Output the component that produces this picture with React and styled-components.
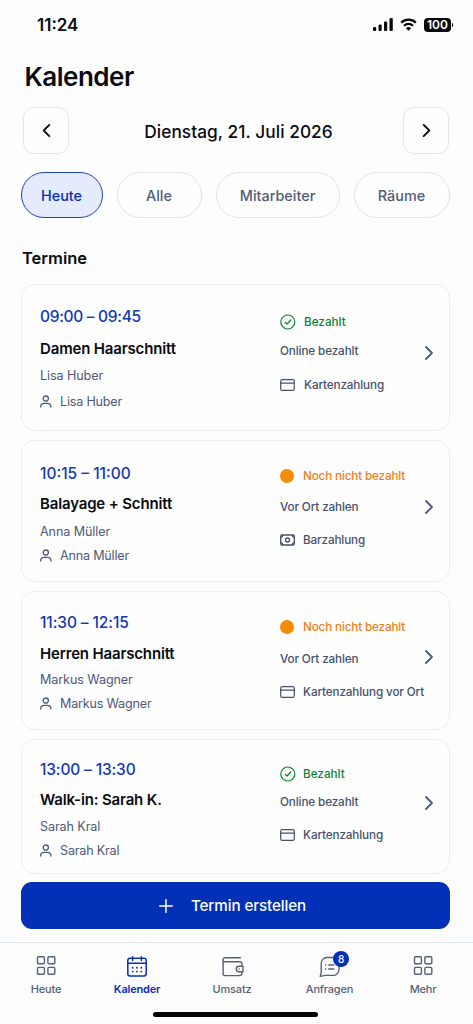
import React from 'react';
import styled, { createGlobalStyle } from 'styled-components';

const appointments = [
    {
        time: '09:00 – 09:45', title: 'Damen Haarschnitt', name: 'Lisa Huber',
        paid: true, place: 'Online bezahlt', method: 'Kartenzahlung', icon: 'card',
        height: 147, left: [21, 12, 7, 6], right: [27, 9, 14], spacing: -0.3, iconWidth: 24, openPad: 10
    },
    {
        time: '10:15 – 11:00', title: 'Balayage + Schnitt', name: 'Anna Müller',
        paid: false, place: 'Vor Ort zahlen', method: 'Barzahlung', icon: 'cash',
        height: 142, left: [22, 10, 8, 4], right: [25, 11, 13], spacing: 0, iconWidth: 23, openPad: 8
    },
    {
        time: '11:30 – 12:15', title: 'Herren Haarschnitt', name: 'Markus Wagner',
        paid: false, place: 'Vor Ort zahlen', method: 'Kartenzahlung vor Ort', icon: 'card',
        height: 139, left: [20, 11, 6, 4], right: [25, 12, 13], spacing: -0.1, iconWidth: 23, openPad: 8
    },
    {
        time: '13:00 – 13:30', title: 'Walk-in: Sarah K.', name: 'Sarah Kral',
        paid: true, place: 'Online bezahlt', method: 'Kartenzahlung', icon: 'card',
        height: 135, left: [19, 10, 7, 4], right: [24, 8, 13], spacing: -0.15, iconWidth: 23, openPad: 8
    }
];

function Chevron({ left, size, width }) {
    return (
        <Icon $w={size} $h={size} viewBox="0 0 16 16" strokeWidth={width}>
            <path d={left ? 'M11 2 5 8l6 6' : 'M5 2l6 6-6 6'} />
        </Icon>
    )
}

function PersonIcon() {
    return (
        <Icon $w={12} $h={13} viewBox="0 0 12 13" strokeWidth="1.3">
            <circle cx="5.8" cy="3.6" r="2.6" />
            <path d="M.7 12.1v-.5c0-2 1.500-3.200 3.500-3.200h3.200c2 0 3.500 1.200 3.500 3.200v.5" />
        </Icon>
    )
}

function MethodIcon({ type }) {
    if (type === 'cash') {
        return (
            <Icon $w={15} $h={12} viewBox="0 0 15 12" strokeWidth="1.3">
                <rect x=".7" y="1" width="13.600" height="10" rx="1.200" />
                <circle cx="7.500" cy="6" r="2" />
                <path d="M1 3.200c1 0 1.600-.7 1.600-1.800M14 3.200c-1 0-1.600-.7-1.600-1.800M1 8.800c1 0 1.600.7 1.600 1.800M14 8.800c-1 0-1.600.7-1.600 1.800" />
            </Icon>
        )
    }
    return (
        <Icon $w={15} $h={12} viewBox="0 0 15 12" strokeWidth="1.2">
            <rect x=".7" y=".7" width="13.600" height="10.600" rx="1.600" />
            <path d="M.7 4.200h13.600" />
        </Icon>
    )
}

function StatusIcon({ paid }) {
    if (!paid) {
        return <Dot />
    }
    return (
        <Icon $w={16} $h={16} viewBox="0 0 16 16" strokeWidth="1.2">
            <circle cx="7.800" cy="8" r="7" />
            <path d="M5.100 8.300 7 10l3.700-4" />
        </Icon>
    )
}

function GridIcon() {
    return (
        <Icon $w={20} $h={20} viewBox="0 0 20 20" strokeWidth="1.4">
            <rect x="1.500" y=".8" width="6.900" height="6.900" rx="1" />
            <rect x="11.900" y=".8" width="6.900" height="6.900" rx="1" />
            <rect x="1.500" y="11.400" width="6.900" height="6.900" rx="1" />
            <rect x="11.900" y="11.400" width="6.900" height="6.900" rx="1" />
        </Icon>
    )
}

function CalendarIcon() {
    return (
        <Icon $w={22} $h={22} viewBox="0 0 22 22" strokeWidth="1.5">
            <rect x="1.800" y="2.300" width="18.400" height="17.600" rx="2.200" />
            <path d="M1.800 7.200h18.400M6.600.8v3.600M15.400.8v3.600" />
            <path
                d="M6.700 11.800h.01M11 11.800h.01M15.300 11.800h.01M6.700 15.600h.01M11 15.600h.01M15.300 15.600h.01"
                strokeWidth="1.900"
            />
        </Icon>
    )
}

function WalletIcon() {
    return (
        <Icon $w={23} $h={22} viewBox="-.6 -.6 23 22" strokeWidth="1.4">
            <path d="M18.800 1.100H3.500a2 2 0 0 0-2 2v13.900a2 2 0 0 0 2 2h14.800a2 2 0 0 0 2-2v-1.900M1.600 4.300c.3.500.9.800 1.700.8h15a2 2 0 0 1 2 2v2.500" />
            <path d="M21.400 9.700h-4a2.700 2.700 0 0 0 0 5.400h4zM17.500 12.300v.2" />
        </Icon>
    )
}

function ChatIcon() {
    return (
        <Icon $w={22} $h={22} viewBox="0 0 22 22" strokeWidth="1.4">
            <path d="M7.800 1.500h6.200a6 6 0 0 1 6 6v5.900a6 6 0 0 1-6 6H6.500L1.200 20.400l1-3.600V7.500a6 6 0 0 1 5.600-6z" />
            <path d="M6.500 8.900h.4M9.800 8.900h5M6.500 12.900h.4M9.800 12.900h5" strokeWidth="1.500" />
        </Icon>
    )
}

function StatusBar() {
    return (
        <Status>
            <Clock>11:24</Clock>
            <Signal viewBox="0 0 20 13">
                <rect x="0" y="9" width="3.200" height="4" rx="1" />
                <rect x="5.500" y="6.500" width="3.200" height="6.500" rx="1" />
                <rect x="11" y="3.500" width="3.200" height="9.500" rx="1" />
                <rect x="16.500" y="0" width="3.300" height="13" rx="1" />
            </Signal>
            <Wifi viewBox="0 0 17 13">
                <path d="M1.200 4.700a10.400 10.400 0 0 1 14.600 0M4 7.700a6.400 6.400 0 0 1 9 0" />
                <path d="M8.500 12.800 5.900 10.200a3.700 3.700 0 0 1 5.200 0z" fill="#08090d" stroke="none" />
            </Wifi>
            <Battery>100</Battery>
            <BatteryCap />
        </Status>
    )
}

function Appointment({ item }) {
    return (
        <Card $height={item.height}>
            <Column $width={240}>
                <Time $gap={item.left[0]} $spacing={item.spacing}>{item.time}</Time>
                <Service $gap={item.left[1]}>{item.title}</Service>
                <Person $gap={item.left[2]}>{item.name}</Person>
                <Employee $gap={item.left[3]}><PersonIcon /><span>{item.name}</span></Employee>
            </Column>
            <Column $width={141}>
                <Payment $gap={item.right[0]} $paid={item.paid}>
                    <IconBox $width={item.iconWidth}><StatusIcon paid={item.paid} /></IconBox>
                    <span>{item.paid ? 'Bezahlt' : 'Noch nicht bezahlt'}</span>
                </Payment>
                <Detail $gap={item.right[1]}>{item.place}</Detail>
                <Detail $gap={item.right[2]}>
                    <IconBox $width={item.iconWidth}><MethodIcon type={item.icon} /></IconBox>{item.method}
                </Detail>
            </Column>
            <Open $pad={item.openPad}><Chevron size={16} width={1.8} /></Open>
        </Card>
    )
}

function App() {
    return (
        <Page>
            <GlobalStyle />
            <StatusBar />
            <Title>Kalender</Title>
            <DateRow>
                <ArrowButton><Chevron left size={15} width={2} /></ArrowButton>
                <DateText>Dienstag, 21. Juli 2026</DateText>
                <ArrowButton><Chevron size={15} width={2} /></ArrowButton>
            </DateRow>
            <Filters>
                <Chip $width={82} $active>Heute</Chip>
                <Chip $width={85}>Alle</Chip>
                <Chip $width={124}>Mitarbeiter</Chip>
                <Chip $width={96}>Räume</Chip>
            </Filters>
            <Subtitle>Termine</Subtitle>
            <List>
                {appointments.map(item => <Appointment key={item.time} item={item} />)}
            </List>
            <CreateButton>
                <Icon $w={14} $h={14} viewBox="0 0 14 14" strokeWidth="1.5">
                    <path d="M7 .7v12.600M.7 7h12.600" />
                </Icon>
                Termin erstellen
            </CreateButton>
            <Nav>
                <NavItem><GridIcon />Heute</NavItem>
                <NavItem $active><CalendarIcon />Kalender</NavItem>
                <NavItem><WalletIcon />Umsatz</NavItem>
                <NavItem><ChatIcon /><Badge>8</Badge>Anfragen</NavItem>
                <NavItem><GridIcon />Mehr</NavItem>
            </Nav>
            <HomeBar />
        </Page>
    )
}

export default App

const GlobalStyle = createGlobalStyle`
    * {
        box-sizing: border-box;
    }

    body {
        margin: 0;
        background: #fdfdfe;
    }

    button {
        font: inherit;
        padding: 0;
    }
`;

const Page = styled.div`
    display: flex;
    flex-direction: column;
    width: 473px;
    height: 1024px;
    overflow: hidden;
    font-family: Inter, "Liberation Sans", sans-serif;
    color: #090b11;
    white-space: nowrap;
`;

const Icon = styled.svg`
    display: block;
    flex: none;
    width: ${props => props.$w}px;
    height: ${props => props.$h}px;
    fill: none;
    stroke: currentColor;
    stroke-linecap: round;
    stroke-linejoin: round;
`;

const Status = styled.div`
    display: flex;
    align-items: center;
    height: 49px;
    padding: 0 20px 0 37px;
`;

const Clock = styled.div`
    flex: 1;
    font-size: 17px;
    font-weight: 600;
`;

const Signal = styled.svg`
    width: 20px;
    height: 13px;
    margin-right: 7px;
    fill: #08090d;
`;

const Wifi = styled.svg`
    width: 17px;
    height: 13px;
    margin-right: 7px;
    fill: none;
    stroke: #08090d;
    stroke-width: 2.2;
`;

const Battery = styled.div`
    width: 27px;
    height: 14px;
    border-radius: 4px;
    background: #08090d;
    color: #fff;
    font-size: 12px;
    font-weight: 600;
    line-height: 14px;
    text-align: center;
`;

const BatteryCap = styled.div`
    width: 1px;
    height: 4px;
    margin-left: 1px;
    border-radius: 0 2px 2px 0;
    background: #08090d;
`;

const Title = styled.h1`
    height: 32px;
    margin: 12px 0 14px 24.5px;
    font-size: 26px;
    font-weight: 600;
    line-height: 32px;
    letter-spacing: -0.5px;
`;

const DateRow = styled.div`
    display: flex;
    align-items: center;
    justify-content: space-between;
    padding: 0 24px 0 23px;
`;

const ArrowButton = styled.button`
    display: flex;
    align-items: center;
    justify-content: center;
    width: 46px;
    height: 47px;
    border: 1px solid #e4e6ef;
    border-radius: 11px;
    background: #fefefe;
    color: #090b11;
`;

const DateText = styled.div`
    padding: 2px 0 0 5px;
    font-size: 17.3px;
    font-weight: 500;
    letter-spacing: 0.05px;
`;

const Filters = styled.div`
    display: flex;
    gap: 14px;
    margin-top: 18px;
    padding-left: 21px;
`;

const Chip = styled.button`
    width: ${props => props.$width}px;
    height: 46px;
    padding-right: 1px;
    border: 1px solid ${props => props.$active ? '#2440b4' : '#e0e3ed'};
    border-radius: 23px;
    background: ${props => props.$active ? '#e4ebfc' : '#fefefe'};
    color: ${props => props.$active ? '#0b2fae' : '#525c74'};
    font-size: 14.4px;
    font-weight: 500;
`;

const Subtitle = styled.h2`
    height: 24px;
    margin: 28px 0 14px 22px;
    font-size: 16.5px;
    font-weight: 600;
    line-height: 24px;
`;

const List = styled.div`
    display: flex;
    flex-direction: column;
    gap: 9px;
    padding: 0 23px 0 21px;
`;

const Card = styled.div`
    display: flex;
    height: ${props => props.$height}px;
    padding-left: 18px;
    border: 1px solid #ebedf3;
    border-radius: 14px;
    background: #fefefe;
`;

const Column = styled.div`
    width: ${props => props.$width}px;
    flex: none;
`;

const Line = styled.div`
    display: flex;
    align-items: center;
    height: 20px;
    margin-top: ${props => props.$gap}px;
`;

const Time = styled(Line)`
    color: #1238b0;
    font-size: 15.5px;
    font-weight: 500;
    letter-spacing: ${props => props.$spacing}px;
`;

const Service = styled(Line)`
    font-size: 15px;
    font-weight: 600;
    letter-spacing: -0.16px;
`;

const Person = styled(Line)`
    color: #4f5a74;
    font-size: 12.6px;
    letter-spacing: -0.1px;
`;

const Employee = styled(Person)`
    gap: 8px;
    letter-spacing: -0.2px;
`;

const Detail = styled(Line)`
    color: #465069;
    font-size: 11.7px;
    font-weight: 500;
    letter-spacing: -0.12px;
`;

const Payment = styled(Line)`
    color: ${props => props.$paid ? '#0a8235' : '#ef7d12'};
    font-size: 11.7px;
    font-weight: 500;
    letter-spacing: ${props => props.$paid ? '0' : '-0.15px'};

    span {
        padding-bottom: 1px;
    }
`;

const IconBox = styled.div`
    width: ${props => props.$width}px;
    flex: none;
`;

const Dot = styled.div`
    width: 14px;
    height: 14px;
    border-radius: 50%;
    background: #f48c06;
`;

const Open = styled.div`
    display: flex;
    align-items: center;
    padding-bottom: ${props => props.$pad}px;
    color: #4f5a74;
`;

const CreateButton = styled.button`
    display: flex;
    align-items: center;
    justify-content: center;
    gap: 18px;
    height: 47px;
    flex: none;
    margin: 8px 23px 13px 21px;
    padding-right: 6px;
    border: 0;
    border-radius: 11px;
    background: #0230b7;
    color: #fff;
    font-size: 15.2px;
    font-weight: 500;
    letter-spacing: -0.1px;
`;

const Nav = styled.nav`
    display: grid;
    grid-template-columns: 92px 90px 100px 95px 92px;
    height: 70px;
    flex: none;
    padding-top: 13px;
    border-top: 1px solid #e3e7ef;
`;

const NavItem = styled.div`
    position: relative;
    display: flex;
    flex-direction: column;
    align-items: center;
    justify-content: space-between;
    height: 40px;
    color: ${props => props.$active ? '#0b2fae' : '#566078'};
    font-size: 11px;
    font-weight: ${props => props.$active ? 600 : 500};
    line-height: 14px;
    letter-spacing: -0.2px;
`;

const Badge = styled.div`
    position: absolute;
    top: -5px;
    left: 51px;
    width: 16px;
    height: 16px;
    border-radius: 50%;
    background: #0230b7;
    color: #fff;
    font-size: 10px;
    line-height: 16px;
    text-align: center;
`;

const HomeBar = styled.div`
    width: 165px;
    height: 5px;
    flex: none;
    margin-left: 153px;
    border-radius: 3px;
    background: #050505;
`;
